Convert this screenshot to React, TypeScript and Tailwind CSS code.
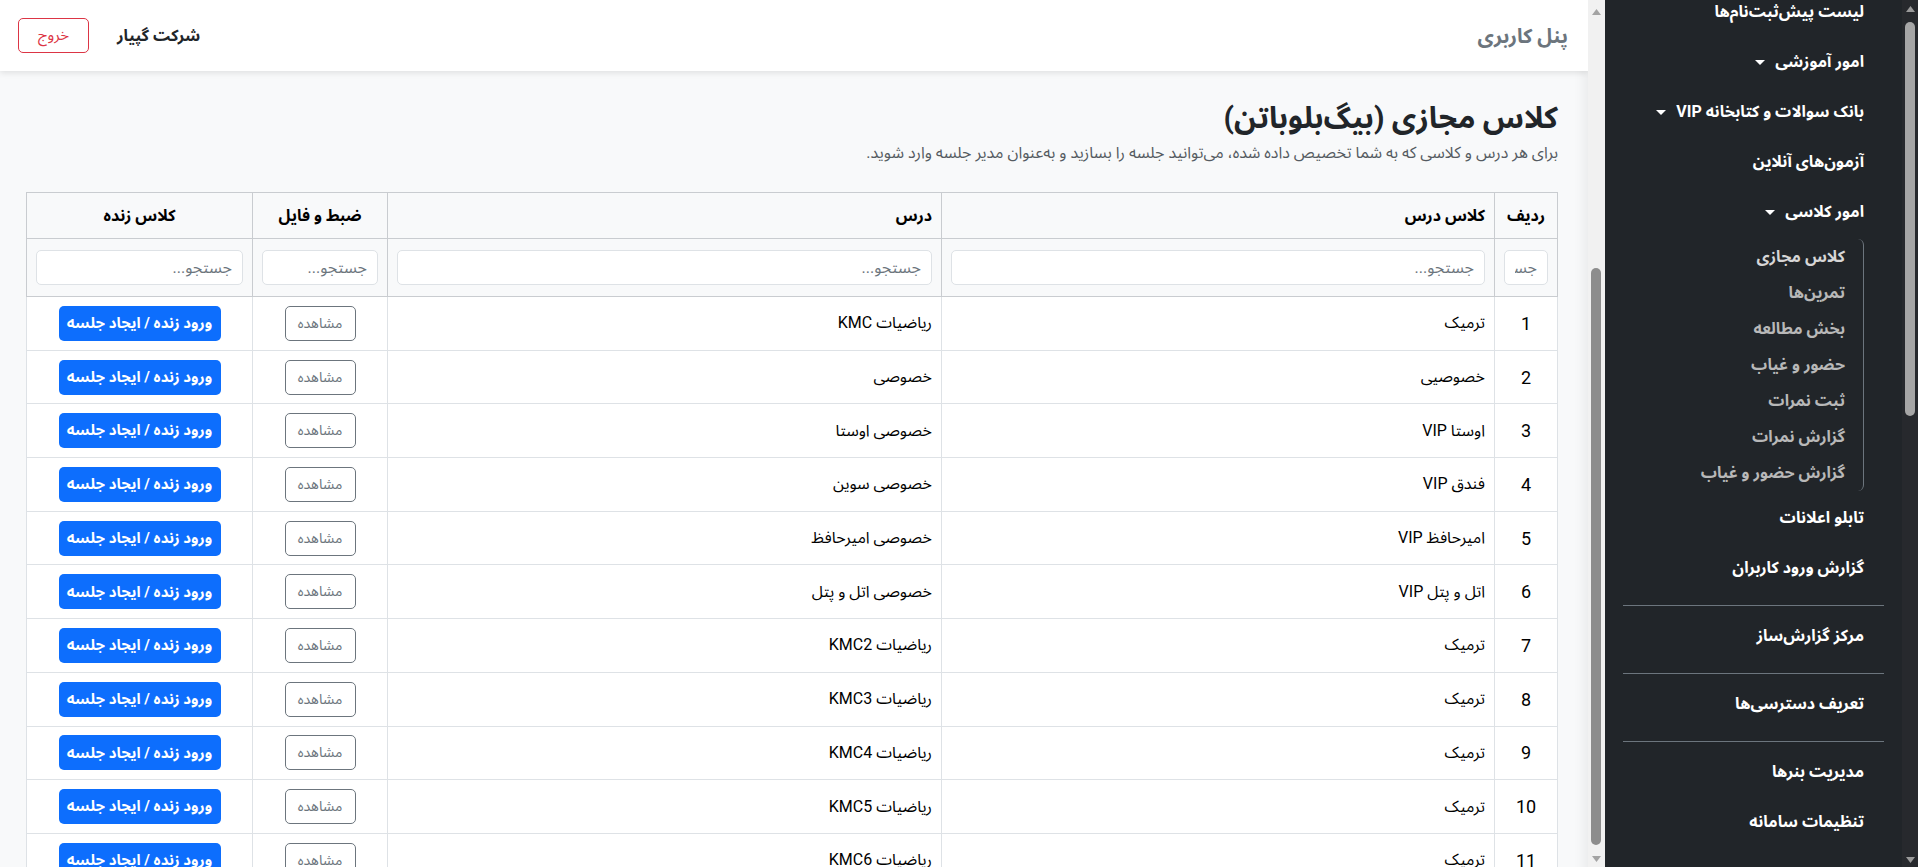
import React from 'react';

const rows: [string, string][] = [
  ['ترمیک', 'ریاضیات KMC'],
  ['خصوصیی', 'خصوصی'],
  ['اوستا VIP', 'خصوصی اوستا'],
  ['فندق VIP', 'خصوصی سوین'],
  ['امیرحافظ VIP', 'خصوصی امیرحافظ'],
  ['اتل و پتل VIP', 'خصوصی اتل و پتل'],
  ['ترمیک', 'ریاضیات KMC2'],
  ['ترمیک', 'ریاضیات KMC3'],
  ['ترمیک', 'ریاضیات KMC4'],
  ['ترمیک', 'ریاضیات KMC5'],
  ['ترمیک', 'ریاضیات KMC6'],
];

const subItems = ['کلاس مجازی', 'تمرین‌ها', 'بخش مطالعه', 'حضور و غیاب', 'ثبت نمرات', 'گزارش نمرات', 'گزارش حضور و غیاب'];

function Caret() {
  return <span className="mr-[10px] inline-block h-0 w-0 border-x-[5px] border-t-[5px] border-x-transparent border-t-white" />;
}

function NavItem({ label, caret }: { label: string; caret?: boolean }) {
  return (
    <div className="flex h-[50px] items-center pr-[20px] text-[16px] font-bold text-white">
      {label}
      {caret && <Caret />}
    </div>
  );
}

function Divider() {
  return <div className="mt-[12px] mb-[5px] h-px bg-[#6c757d]" />;
}

function Arrow({ up, color }: { up?: boolean; color: string }) {
  return (
    <svg width="9" height="6" viewBox="0 0 9 6" className="mx-auto">
      <path d={up ? 'M0 6 L4.5 0 L9 6 Z' : 'M0 0 L4.5 6 L9 0 Z'} fill={color} />
    </svg>
  );
}

function Sidebar() {
  return (
    <aside className="flex h-full w-[313px] shrink-0 bg-[#212529]">
      {/* scrollbar, on the right edge */}
      <div className="relative h-full w-[16px] shrink-0 bg-[#27292d]">
        <div className="absolute top-[6px] left-0 right-0"><Arrow up color="#9a9a9a" /></div>
        <div className="absolute top-[22px] right-[3px] h-[394px] w-[10px] rounded-full bg-[#a6a6a6]" />
        <div className="absolute bottom-[4px] left-0 right-0"><Arrow color="#9a9a9a" /></div>
      </div>
      <div className="flex-1 px-[18px]">
        <div className="-mt-[13px]">
          <NavItem label="لیست پیش‌ثبت‌نام‌ها" />
          <NavItem label="امور آموزشی" caret />
          <NavItem label="بانک سوالات و کتابخانه VIP" caret />
          <NavItem label="آزمون‌های آنلاین" />
          <NavItem label="امور کلاسی" caret />
          <div className="my-[2px] mr-[20px] rounded-md border-r border-[#6c757d]">
            {subItems.map((s, i) => (
              <div
                key={s}
                className={
                  'flex h-[36px] items-center pr-[18px] text-[16px] font-bold ' +
                  (i === 0 ? 'text-[#d6d6d6]' : 'text-[#b8b8b8]')
                }
              >
                {s}
              </div>
            ))}
          </div>
          <NavItem label="تابلو اعلانات" />
          <NavItem label="گزارش ورود کاربران" />
          <Divider />
          <NavItem label="مرکز گزارش‌ساز" />
          <Divider />
          <NavItem label="تعریف دسترسی‌ها" />
          <Divider />
          <NavItem label="مدیریت بنرها" />
          <NavItem label="تنظیمات سامانه" />
        </div>
      </div>
    </aside>
  );
}

function MainScrollbar() {
  return (
    <div className="relative h-full w-[17px] shrink-0 bg-[#f1f1f1]">
      <div className="absolute top-[9px] left-0 right-0"><Arrow up color="#a3a3a3" /></div>
      <div className="absolute top-[268px] right-[4px] h-[577px] w-[10px] rounded-full bg-[#8d8d8d]" />
      <div className="absolute bottom-[5px] left-0 right-0"><Arrow color="#a3a3a3" /></div>
    </div>
  );
}

export default function App() {
  const th = 'border border-[#c9ccd0] px-[9px] align-middle';
  const td = 'border border-[#dee2e6] px-[9px] align-middle';
  return (
    <div
      dir="rtl"
      className="flex h-[867px] w-[1918px] overflow-hidden bg-[#f8f9fa] font-[Roboto,'Noto_Sans_Arabic','DejaVu_Sans',sans-serif] text-[#212529]"
    >
      <Sidebar />
      <MainScrollbar />
      <main className="flex min-w-0 flex-1 flex-col shadow-[inset_-18px_0_14px_-16px_rgba(0,0,0,0.08)]">
        <header className="flex h-[71px] shrink-0 items-center justify-between bg-white pr-[20px] pl-[18px] shadow-[0_2px_6px_rgba(0,0,0,0.1)]">
          <div className="text-[20px] font-bold text-[#6c757d]">پنل کاربری</div>
          <div className="flex items-center gap-[28px]">
            <div className="text-[16px] font-bold text-[#212529]">شرکت گپیار</div>
            <button className="h-[35px] w-[71px] rounded-[5px] border border-[#dc3545] text-[15px] text-[#dc3545]">خروج</button>
          </div>
        </header>

        <div className="pt-[28px] pr-[30px] pl-[27px]">
          <h1 className="text-[30px] leading-[38px] font-bold text-[#212529]">کلاس مجازی (بیگ‌بلوباتن)</h1>
          <p className="mt-[5px] text-[16px] leading-[22px] text-[#555b61]">
            برای هر درس و کلاسی که به شما تخصیص داده شده، می‌توانید جلسه را بسازید و به‌عنوان مدیر جلسه وارد شوید.
          </p>

          <table className="mt-[28px] w-full table-fixed border-collapse">
            <colgroup>
              <col className="w-[63px]" />
              <col className="w-[553px]" />
              <col className="w-[554px]" />
              <col className="w-[135px]" />
              <col className="w-[226px]" />
            </colgroup>
            <thead className="bg-[#f8f9fa] text-[16px] font-bold text-black">
              <tr className="h-[46px]">
                <th className={th + ' text-center'}>ردیف</th>
                <th className={th + ' text-right'}>کلاس درس</th>
                <th className={th + ' text-right'}>درس</th>
                <th className={th + ' text-center'}>ضبط و فایل</th>
                <th className={th + ' text-center'}>کلاس زنده</th>
              </tr>
              <tr className="h-[58px]">
                {[0, 1, 2, 3, 4].map(i => (
                  <th key={i} className={th}>
                    <input
                      placeholder="جستجو..."
                      className="block h-[35px] w-full rounded-[5px] border border-[#dee2e6] bg-white px-[10px] text-[16px] font-normal placeholder:text-[#6c757d]"
                    />
                  </th>
                ))}
              </tr>
            </thead>
            <tbody className="bg-white text-[16px] text-black">
              {rows.map(([cls, lesson], i) => (
                <tr key={i} className="h-[53.7px]">
                  <td className={td + ' text-center text-[18px]'}>{i + 1}</td>
                  <td className={td + ' text-right'}>{cls}</td>
                  <td className={td + ' text-right'}>{lesson}</td>
                  <td className={td + ' text-center'}>
                    <button className="h-[35px] w-[71px] rounded-[5px] border border-[#6c757d] text-[14px] text-[#6c757d]">مشاهده</button>
                  </td>
                  <td className={td + ' text-center'}>
                    <button className="h-[35px] w-[162px] rounded-[5px] bg-[#0d6efd] text-[15px] font-bold text-white">ورود زنده / ایجاد جلسه</button>
                  </td>
                </tr>
              ))}
            </tbody>
          </table>
        </div>
      </main>
    </div>
  );
}
